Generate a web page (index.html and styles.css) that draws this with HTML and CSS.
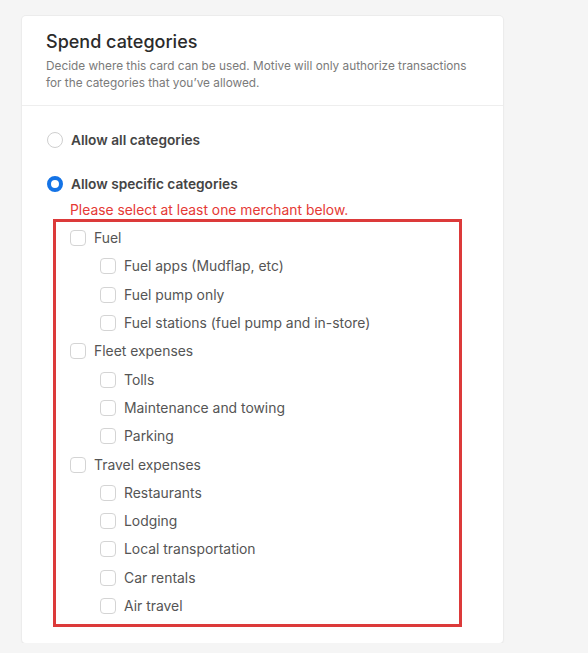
FILE: index.html
```html
<!DOCTYPE html>
<html lang="en">
<head>
<meta charset="utf-8">
<title>Spend categories</title>
<link rel="stylesheet" href="styles.css">
</head>
<body>
<section class="card">
  <header class="card-header">
    <h2 class="title">Spend categories</h2>
    <p class="desc">Decide where this card can be used. Motive will only authorize transactions for the categories that you’ve allowed.</p>
  </header>
  <div class="card-body">
    <label class="radio-row"><span class="radio"></span><span class="radio-label">Allow all categories</span></label>
    <label class="radio-row second"><span class="radio checked"></span><span class="radio-label">Allow specific categories</span></label>
    <div class="error">Please select at least one merchant below.</div>
    <div class="cat-box">
      <div class="row"><span class="cb"></span><span>Fuel</span></div>
      <div class="row sub"><span class="cb"></span><span>Fuel apps (Mudflap, etc)</span></div>
      <div class="row sub"><span class="cb"></span><span>Fuel pump only</span></div>
      <div class="row sub"><span class="cb"></span><span>Fuel stations (fuel pump and in-store)</span></div>
      <div class="row"><span class="cb"></span><span>Fleet expenses</span></div>
      <div class="row sub"><span class="cb"></span><span>Tolls</span></div>
      <div class="row sub"><span class="cb"></span><span>Maintenance and towing</span></div>
      <div class="row sub"><span class="cb"></span><span>Parking</span></div>
      <div class="row"><span class="cb"></span><span>Travel expenses</span></div>
      <div class="row sub"><span class="cb"></span><span>Restaurants</span></div>
      <div class="row sub"><span class="cb"></span><span>Lodging</span></div>
      <div class="row sub"><span class="cb"></span><span>Local transportation</span></div>
      <div class="row sub"><span class="cb"></span><span>Car rentals</span></div>
      <div class="row sub"><span class="cb"></span><span>Air travel</span></div>
    </div>
  </div>
</section>
</body>
</html>
```
FILE: styles.css
```css
html, body {
  margin: 0;
  background: #f5f5f5;
}
body {
  padding: 16px 0 0 22px;
  font-family: Inter, "Noto Sans", sans-serif;
}
.card {
  width: 481px;
  height: 627px;
  box-sizing: border-box;
  background: #fff;
  border-radius: 4px;
  box-shadow: 0 0 0 1px #ececec, 0 1px 2px rgba(0,0,0,0.10);
}
.card-header {
  padding: 14px 24px 13px;
  border-bottom: 1px solid #eeeeee;
}
.title {
  margin: 0;
  font-size: 18px;
  line-height: 24px;
  font-weight: 500;
  color: #2b2b2b;
}
.desc {
  margin: 4px 0 0;
  font-size: 11.8px;
  line-height: 17px;
  color: #7a7a7a;
}
.card-body {
  padding: 24px 24px 0;
}
.radio-row {
  display: flex;
  align-items: center;
  height: 20px;
  gap: 8px;
}
.radio-row.second {
  margin-top: 24px;
}
.radio {
  width: 16px;
  height: 16px;
  box-sizing: border-box;
  border-radius: 50%;
  border: 1px solid #cfcfcf;
  background: #fff;
  margin-left: 1px;
}
.radio.checked {
  border: 4px solid #1473e6;
}
.radio-label {
  font-size: 13.7px;
  font-weight: 600;
  color: #444;
}
.error {
  margin: 7px 0 0 24px;
  font-size: 13.85px;
  line-height: 18px;
  color: #e53935;
}
.cat-box {
  margin: 0 0 0 7px;
  width: 409px;
  box-sizing: border-box;
  border: 3px solid #dc3a3a;
  padding: 2px 0 4px 14px;
}
.row {
  display: flex;
  align-items: center;
  gap: 8px;
  height: 28.3px;
  font-size: 13.9px;
  color: #555;
}
.row.sub {
  padding-left: 30px;
}
.cb {
  width: 16px;
  height: 16px;
  box-sizing: border-box;
  border: 1px solid #d4d4d4;
  border-radius: 4px;
  background: #fff;
  flex: none;
}
```
